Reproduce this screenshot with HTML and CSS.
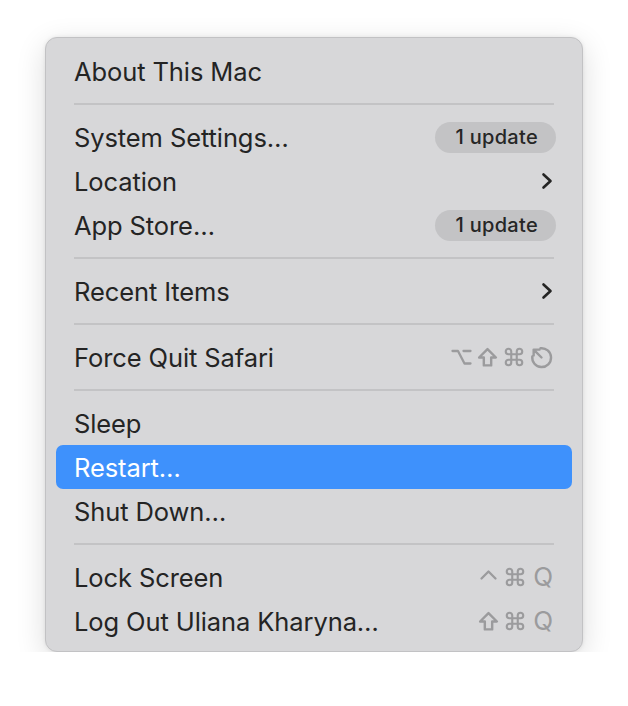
FILE: index.html
```html
<!DOCTYPE html>
<html lang="en">
<head>
<meta charset="UTF-8" />
<meta name="viewport" content="width=device-width, initial-scale=1" />
<title>Apple Menu</title>
<link rel="stylesheet" href="styles.css">
</head>
<body>

<div class="menu">
  <div class="item"><span class="label">About This Mac</span></div>
  <div class="sep"></div>

  <div class="item">
    <span class="label">System Settings…</span>
    <span class="badge">1 update</span>
  </div>
  <div class="item">
    <span class="label">Location</span>
    <svg class="chevron" width="12" height="18" viewBox="0 0 12 18"><path d="M2.5 2.5 L9.5 9 L2.5 15.5" /></svg>
  </div>
  <div class="item">
    <span class="label">App Store…</span>
    <span class="badge">1 update</span>
  </div>
  <div class="sep"></div>

  <div class="item">
    <span class="label">Recent Items</span>
    <svg class="chevron" width="12" height="18" viewBox="0 0 12 18"><path d="M2.5 2.5 L9.5 9 L2.5 15.5" /></svg>
  </div>
  <div class="sep"></div>

  <div class="item">
    <span class="label">Force Quit Safari</span>
    <span class="keys">
      <!-- option -->
      <svg class="key" width="21" height="20" viewBox="0 0 21 20"><path d="M1.5 4 H7 L13.5 16.5 H19.5 M12.5 4 H19.5" /></svg>
      <!-- shift -->
      <svg class="key" width="21" height="21" viewBox="0 0 20 20"><path d="M10 2 L18 10 H13.5 V17.5 H6.5 V10 H2 Z" /></svg>
      <!-- command -->
      <svg class="key" width="22" height="22" viewBox="0 0 24 24"><path d="M15 6v12a3 3 0 1 0 3-3H6a3 3 0 1 0 3 3V6a3 3 0 1 0-3 3h12a3 3 0 1 0-3-3" /></svg>
      <!-- escape -->
      <svg class="key" width="23" height="23" viewBox="0 0 22 22"><path d="M10 2.2 A9 9 0 1 1 2.2 10 M3.5 3.5 L11 11 M3.5 3.5 V9 M3.5 3.5 H9" /></svg>
    </span>
  </div>
  <div class="sep"></div>

  <div class="item"><span class="label">Sleep</span></div>
  <div class="item active"><span class="label">Restart…</span></div>
  <div class="item"><span class="label">Shut Down…</span></div>
  <div class="sep"></div>

  <div class="item">
    <span class="label">Lock Screen</span>
    <span class="keys">
      <!-- control -->
      <svg class="key" width="21" height="20" viewBox="0 0 20 20"><path d="M3 11.5 L10 4.5 L17 11.5" /></svg>
      <svg class="key" width="22" height="22" viewBox="0 0 24 24"><path d="M15 6v12a3 3 0 1 0 3-3H6a3 3 0 1 0 3 3V6a3 3 0 1 0-3 3h12a3 3 0 1 0-3-3" /></svg>
      <span class="q">Q</span>
    </span>
  </div>
  <div class="item">
    <span class="label">Log Out Uliana Kharyna…</span>
    <span class="keys">
      <svg class="key" width="21" height="21" viewBox="0 0 20 20"><path d="M10 2 L18 10 H13.5 V17.5 H6.5 V10 H2 Z" /></svg>
      <svg class="key" width="22" height="22" viewBox="0 0 24 24"><path d="M15 6v12a3 3 0 1 0 3-3H6a3 3 0 1 0 3 3V6a3 3 0 1 0-3 3h12a3 3 0 1 0-3-3" /></svg>
      <span class="q">Q</span>
    </span>
  </div>
</div>

</body>
</html>
```

FILE: styles.css
```css
html, body {
  margin: 0;
  background: #fff;
  font-family: Inter, "Noto Sans", "Liberation Sans", sans-serif;
}

/* Menu panel */
.menu {
  width: 538px;
  margin: 37px 0 0 45px;
  padding: 11px 10px 8px;
  box-sizing: border-box;
  background: #d7d7d9;
  border: 1px solid #c2c2c4;
  border-radius: 12px;
  box-shadow: 0 8px 30px rgba(0, 0, 0, 0.14), 0 0 4px rgba(0, 0, 0, 0.08);
  display: flex;
  flex-direction: column;
}

.item {
  height: 44px;
  padding: 0 17px 0 18px;
  display: flex;
  align-items: center;
  justify-content: space-between;
  border-radius: 7px;
  color: #242424;
  font-size: 25.5px;
  letter-spacing: -0.1px;
}

.item.active {
  background: #3e91fc;
  color: #fff;
}

.sep {
  height: 2px;
  margin: 10px 18px;
  background: #c3c3c5;
}

/* "1 update" pill */
.badge {
  height: 31px;
  line-height: 31px;
  padding: 0 18px 0 20px;
  margin-right: -1px;
  border-radius: 16px;
  background: #c3c3c5;
  color: #262626;
  font-size: 20px;
  font-weight: 500;
  letter-spacing: 0.3px;
}

.chevron {
  fill: none;
  stroke: #242424;
  stroke-width: 2.6;
  stroke-linecap: round;
  stroke-linejoin: round;
  margin-right: 2px;
}

/* shortcut glyphs */
.keys {
  display: flex;
  align-items: center;
  gap: 5px;
  margin-right: 2px;
}

.key {
  fill: none;
  stroke: #9b9b9d;
  stroke-width: 2.3;
  stroke-linecap: round;
  stroke-linejoin: round;
}

.q {
  color: #9b9b9d;
  font-size: 26px;
  line-height: 1;
  margin-left: 2px;
}
```
